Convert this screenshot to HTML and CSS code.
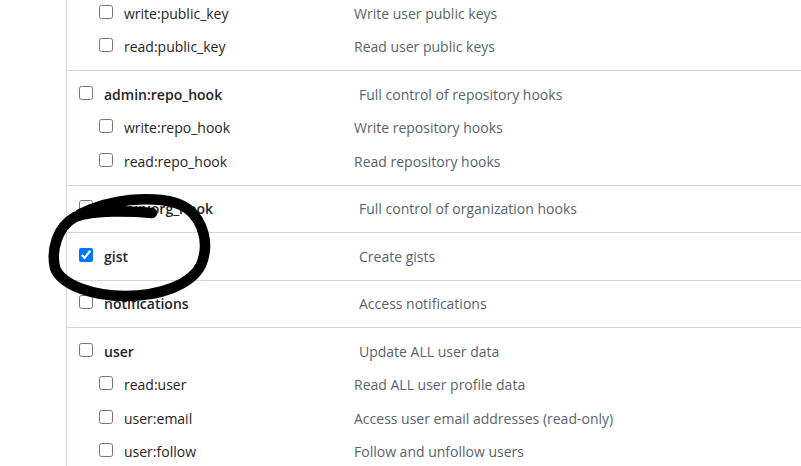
FILE: index.html
```html
<!DOCTYPE html>
<html lang="en">
<head>
<meta charset="utf-8">
<title>Scopes</title>
<link rel="stylesheet" href="styles.css">
</head>
<body>
<div class="perm-list">
  <div class="group cut">
    <label class="row sub"><input type="checkbox"><span class="name">write:public_key</span><span class="desc">Write user public keys</span></label>
    <label class="row sub"><input type="checkbox"><span class="name">read:public_key</span><span class="desc">Read user public keys</span></label>
  </div>
  <div class="group">
    <label class="row top"><input type="checkbox"><span class="name">admin:repo_hook</span><span class="desc">Full control of repository hooks</span></label>
    <label class="row sub"><input type="checkbox"><span class="name">write:repo_hook</span><span class="desc">Write repository hooks</span></label>
    <label class="row sub"><input type="checkbox"><span class="name">read:repo_hook</span><span class="desc">Read repository hooks</span></label>
  </div>
  <div class="group">
    <label class="row top"><input type="checkbox"><span class="name">admin:org_hook</span><span class="desc">Full control of organization hooks</span></label>
  </div>
  <div class="group">
    <label class="row top"><input type="checkbox" checked><span class="name">gist</span><span class="desc">Create gists</span></label>
  </div>
  <div class="group">
    <label class="row top"><input type="checkbox"><span class="name">notifications</span><span class="desc">Access notifications</span></label>
  </div>
  <div class="group">
    <label class="row top"><input type="checkbox"><span class="name">user</span><span class="desc">Update ALL user data</span></label>
    <label class="row sub"><input type="checkbox"><span class="name">read:user</span><span class="desc">Read ALL user profile data</span></label>
    <label class="row sub"><input type="checkbox"><span class="name">user:email</span><span class="desc">Access user email addresses (read-only)</span></label>
    <label class="row sub"><input type="checkbox"><span class="name">user:follow</span><span class="desc">Follow and unfollow users</span></label>
  </div>
</div>
<svg class="annotation" width="801" height="466" viewBox="0 0 801 466" aria-hidden="true">
  <path d="M152,213 C130,211 95,210 75,217 C57,227 51,250 55,268 C62,286 95,296 125,296 C160,296 191,285 201,265 C210,244 203,221 188,209 C175,199 150,198 130,200 C110,202 95,207 80,214" fill="none" stroke="#000" stroke-width="10.5" stroke-linecap="round" stroke-linejoin="round"/>
</svg>
</body>
</html>
```

FILE: styles.css
```css
html, body {
  margin: 0;
  padding: 0;
  background: #ffffff;
}

body {
  font-family: "Open Sans", "Noto Sans", "Liberation Sans", sans-serif;
  font-size: 14px;
  color: #1f2328;
  overflow: hidden;
  position: relative;
  height: 466px;
}

.perm-list {
  margin-left: 66px;
  border-left: 1px solid #d0d7de;
  height: 466px;
}

.group {
  padding: 11px 0 11.5px;
  border-top: 1px solid #d0d7de;
}

.group.cut {
  border-top: 0;
  padding-top: 1px;
}

.row {
  display: flex;
  align-items: center;
  height: 24px;
}

.row + .row {
  margin-top: 9.5px;
}

.row.top {
  padding-left: 12px;
}

.row.sub {
  padding-left: 32px;
}

.row input {
  flex: none;
  width: 14px;
  height: 14px;
  margin: 0 11px 3px 0;
}

.name {
  flex: none;
}

.top .name {
  width: 255px;
  font-weight: 600;
}

.sub .name {
  width: 230px;
}

.desc {
  color: #59636e;
}

.annotation {
  position: absolute;
  top: 0;
  left: 0;
  pointer-events: none;
}
```
